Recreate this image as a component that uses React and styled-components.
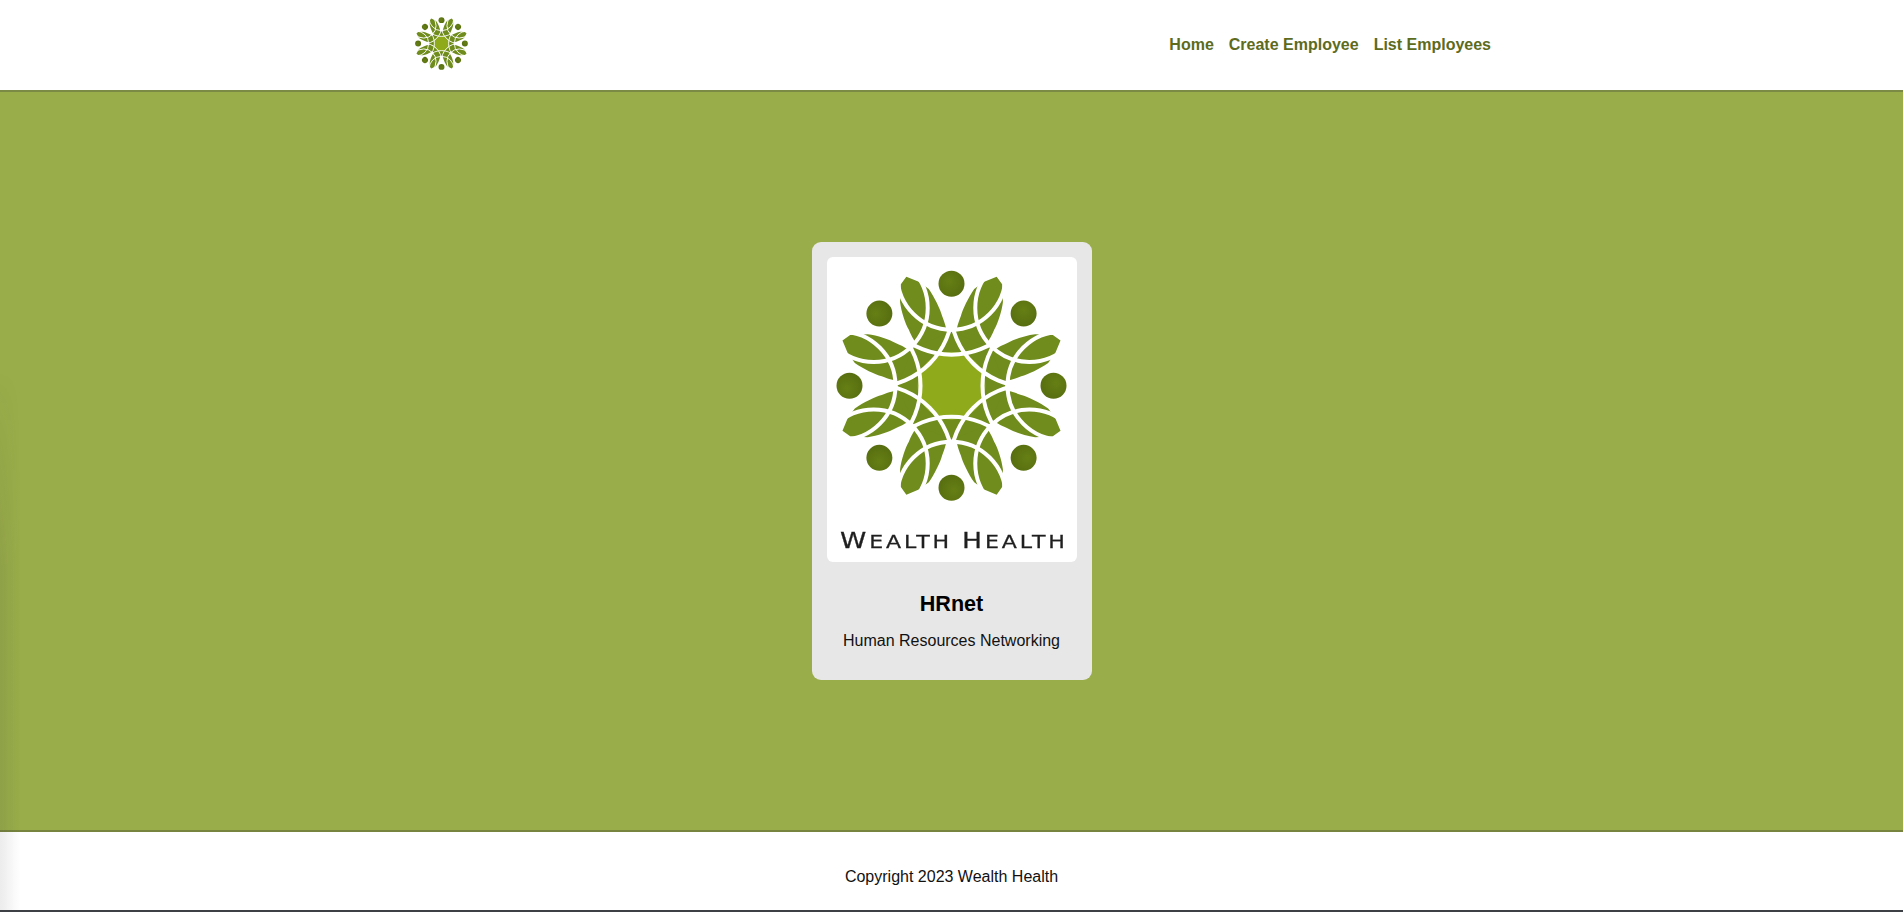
import React from "react";
import styled, { createGlobalStyle } from "styled-components";

const Global = createGlobalStyle`
  html, body { margin: 0; padding: 0; background: #fff; }
  body { font-family: "Liberation Sans", Arial, sans-serif; color: #000; overflow: hidden; }
  * { box-sizing: border-box; }
`;

const Page = styled.div`
  position: relative;
  height: 912px;
  display: flex;
  flex-direction: column;
`;

const Header = styled.header`
  height: 92px;
  flex: none;
  background: #fff;
  border-bottom: 2px solid #7b8a45;
  display: flex;
  align-items: center;
  justify-content: space-between;
  padding: 0 412px 4px 414px;
`;

const Nav = styled.nav`
  display: flex;
  gap: 15px;
  padding-top: 4px;
`;

const NavLink = styled.a`
  font-size: 16px;
  font-weight: 700;
  color: #5d6b1c;
  text-decoration: none;
`;

const Main = styled.main`
  flex: 1;
  background: #99ad4a;
  display: flex;
  align-items: center;
  justify-content: center;
`;

const Card = styled.article`
  width: 280px;
  height: 438px;
  padding: 15px;
  background: #e7e7e7;
  border-radius: 9px;
  text-align: center;
`;

const Picture = styled.div`
  width: 250px;
  height: 305px;
  background: #fff;
  border-radius: 6px;
  overflow: hidden;
  svg { display: block; filter: blur(0.35px); }
`;

const Title = styled.h1`
  margin: 30px 0 0;
  font-size: 21.6px;
  line-height: 24px;
  font-weight: 700;
  color: #000;
`;

const Subtitle = styled.p`
  margin: 16px 0 0;
  font-size: 16px;
  line-height: 18px;
  color: #111;
`;

const Footer = styled.footer`
  height: 82px;
  flex: none;
  background: #fff;
  border-top: 2px solid #76843f;
  border-bottom: 2px solid #3d4146;
  display: flex;
  align-items: center;
  justify-content: center;
  padding-top: 12px;
  font-size: 16px;
  color: #111;
`;

const EdgeShade = styled.div`
  position: absolute;
  left: 0;
  top: 370px;
  bottom: 2px;
  width: 20px;
  pointer-events: none;
  background: linear-gradient(to right, rgba(40, 40, 40, 0.09), rgba(40, 40, 40, 0));
  mask-image: linear-gradient(to bottom, transparent, #000 200px);
`;

const angles = Array.from({ length: 8 }, (_, i) => i * 45);
const PETAL =
  "M0,-118 L-8,-113 L-15.5,-97 C-18,-88 -19,-75 -18,-68 C-18,-60 -17,-55 -16,-50 L16,-50 C17,-55 18,-60 18,-68 C19,-75 18,-88 16,-98 L10,-108 Z";

const Mark = () => (
  <>
    <defs>
      <radialGradient id="dot" cx="40%" cy="40%" r="70%">
        <stop offset="0%" stopColor="#667f14" />
        <stop offset="100%" stopColor="#566c10" />
      </radialGradient>
    </defs>
    <circle r="54" fill="#6f8c1c" />
    {angles.map((a, i) => (
      <path
        key={a}
        d={PETAL}
        fill="#6f8c1c"
        transform={`rotate(${a + 22.5}) scale(${i % 2 === 0 ? -1 : 1} 1)`}
      />
    ))}
    <circle r="34" fill="#8fab1c" />
    {angles.map((a) => (
      <g key={a} transform={`rotate(${a})`} fill="none" stroke="#fff" strokeWidth="4">
        <circle cy="-110" r="54" />
        <circle cy="-110" r="79" />
      </g>
    ))}
    {angles.map((a) => (
      <circle key={a} cy="-102" r="13" fill="url(#dot)" transform={`rotate(${a})`} />
    ))}
  </>
);

const Logo = () => (
  <svg width="250" height="305" viewBox="0 0 250 305">
    <g transform="translate(124.5 128.7)">
      <Mark />
    </g>
    <g transform="scale(1.3 1)">
      <text
        x="10"
        y="291"
        fontFamily="'DejaVu Sans', sans-serif"
        fill="#1f1f1f"
        stroke="#1f1f1f"
        strokeWidth="0.25"
        textLength="173"
        lengthAdjust="spacing"
      >
        <tspan fontSize="20.5">W</tspan>
        <tspan fontSize="17">EALTH </tspan>
        <tspan fontSize="20.5">H</tspan>
        <tspan fontSize="17">EALTH</tspan>
      </text>
    </g>
  </svg>
);

const SmallLogo = () => (
  <svg width="55" height="55" viewBox="-120 -120 240 240">
    <Mark />
  </svg>
);

export default function App() {
  return (
    <Page>
      <Global />
      <Header>
        <SmallLogo />
        <Nav>
          <NavLink href="#">Home</NavLink>
          <NavLink href="#">Create Employee</NavLink>
          <NavLink href="#">List Employees</NavLink>
        </Nav>
      </Header>
      <Main>
        <Card>
          <Picture>
            <Logo />
          </Picture>
          <Title>HRnet</Title>
          <Subtitle>Human Resources Networking</Subtitle>
        </Card>
      </Main>
      <Footer>Copyright 2023 Wealth Health</Footer>
      <EdgeShade />
    </Page>
  );
}
